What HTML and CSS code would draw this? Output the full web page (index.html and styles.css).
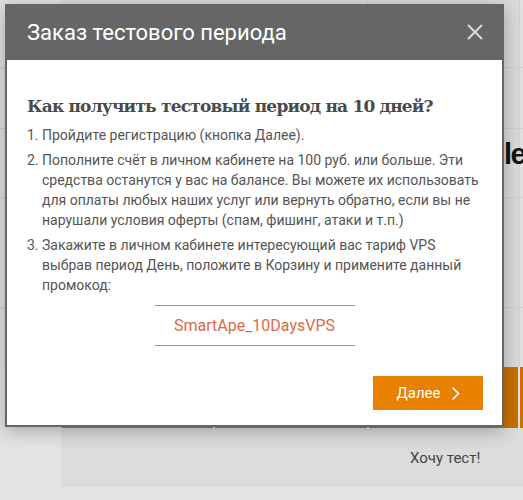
FILE: index.html
```html
<!DOCTYPE html>
<html lang="ru">
<head>
<meta charset="utf-8">
<title>Заказ тестового периода</title>
<link rel="stylesheet" href="styles.css">
</head>
<body>
<div class="page">
  <div class="grid">
    <div class="row r1"><div class="c0"></div><div class="c"></div><div class="c wide"></div><div class="c"></div><div class="c4"></div></div>
    <div class="row r2"><div class="c0"></div><div class="c"></div><div class="c wide"></div><div class="c"></div><div class="c4"></div></div>
    <div class="row r3"><div class="c0"></div><div class="c"></div><div class="c wide"></div><div class="c"></div><div class="c4"></div><span class="bgtitle">lel</span></div>
    <div class="row r4"><div class="c0"></div><div class="c"></div><div class="c wide"></div><div class="c"></div><div class="c4"></div></div>
    <div class="row r5 last"><div class="c0"></div><div class="c"></div><div class="c wide"></div><div class="c"></div><div class="c4"></div></div>
  </div>
  <div class="orange-row">
    <div class="ocell"></div><div class="ocell"></div><div class="ocell"></div><div class="ocell"></div>
  </div>
  <div class="cta"><span class="cta-text">Хочу тест!</span></div>
</div>

<div class="modal">
  <div class="modal-head">
    <span class="modal-title">Заказ тестового периода</span>
    <svg class="close" width="16" height="16" viewBox="0 0 16 16"><path d="M1 1 L15 15 M15 1 L1 15" stroke="#dcdcdc" stroke-width="2" fill="none"/></svg>
  </div>
  <div class="modal-body">
    <h2 class="heading">Как получить тестовый период на 10 дней?</h2>
    <ol class="steps">
      <li class="step"><span class="num">1.</span><span class="txt">Пройдите регистрацию (кнопка Далее).</span></li>
      <li class="step"><span class="num">2.</span><span class="txt">Пополните счёт в личном кабинете на 100 руб. или больше. Эти средства останутся у вас на балансе. Вы можете их использовать для оплаты любых наших услуг или вернуть обратно, если вы не нарушали условия оферты (спам, фишинг, атаки и т.п.)</span></li>
      <li class="step"><span class="num">3.</span><span class="txt">Закажите в личном кабинете интересующий вас тариф VPS выбрав период День, положите в Корзину и примените данный промокод:</span></li>
    </ol>
    <div class="promo">SmartApe_10DaysVPS</div>
    <div class="actions">
      <button class="btn">Далее <svg class="chev" width="9" height="15" viewBox="0 0 9 15"><polyline points="1.5,1.5 7.5,7.5 1.5,13.5" stroke="#fff" stroke-width="1.6" fill="none"/></svg></button>
    </div>
  </div>
</div>
</body>
</html>
```

FILE: styles.css
```css
html, body {
  margin: 0;
  padding: 0;
}
body {
  width: 523px;
  height: 500px;
  overflow: hidden;
  background: #e4e4e4;
  font-family: Roboto, "Liberation Sans", sans-serif;
  position: relative;
}
.page {
  width: 523px;
}
.grid {
  display: flex;
  flex-direction: column;
}
.row {
  display: grid;
  grid-template-columns: 62px 152px 154px 152px 1fr;
  border-bottom: 1px solid #cfcfcf;
  position: relative;
}
.row.last { border-bottom: none; }
.r1 { height: 67px; }
.r2 { height: 60px; }
.r3 { height: 68px; }
.r4 { height: 109px; }
.r5 { height: 59px; }
.c {
  border-right: 1px solid #d0d0d0;
  background: #dbdbdb;
}
.c4 { background: #e1e1e1; }
.c0 { background: #e2e2e2; }
.bgtitle {
  position: absolute;
  left: 504px;
  top: 9px;
  font-family: "Liberation Sans", sans-serif;
  font-weight: bold;
  font-size: 29px;
  letter-spacing: -1.5px;
  color: #141414;
  white-space: nowrap;
}
.orange-row {
  display: grid;
  grid-template-columns: 151px 152px 149px 1fr;
  column-gap: 2px;
  margin-left: 62px;
  height: 61px;
}
.ocell { background: #c97000; }
.cta {
  margin-left: 61px;
  height: 59px;
  background: #dcdcdc;
  display: flex;
  align-items: center;
  padding-left: 349px;
}
.cta-text {
  font-size: 15px;
  color: #444;
}

.modal {
  position: absolute;
  left: 5px;
  top: 4px;
  width: 499px;
  box-shadow: 0 4px 18px rgba(0,0,0,0.28);
}
.modal-head {
  height: 56px;
  background: #666666;
  display: flex;
  align-items: center;
  justify-content: space-between;
  padding: 0 21px 0 22px;
}
.modal-title {
  color: #fff;
  font-size: 22px;
  font-weight: 400;
}
.close { display: block; }
.modal-body {
  background: #fff;
  border: 2px solid #666666;
  border-top: none;
  padding: 34px 20px 15px 20px;
}
.heading {
  margin: 0;
  font-family: "DejaVu Serif", "Liberation Serif", serif;
  font-weight: bold;
  font-size: 17px;
  line-height: 24px;
  color: #4a4a4a;
  letter-spacing: -0.8px;
}
.steps {
  list-style: none;
  margin: 7px 0 0 0;
  padding: 0;
  color: #555;
  font-size: 14px;
  line-height: 20px;
}
.step {
  display: flex;
  margin-bottom: 5px;
}
.step:last-child { margin-bottom: 0; }
.num {
  flex: 0 0 15px;
}
.txt { flex: 1; }
.promo {
  width: 200px;
  margin: 10px auto 0;
  border-top: 1px solid #e07a5c;
  border-bottom: 1px solid #e07a5c;
  text-align: center;
  line-height: 39px;
  font-size: 16px;
  color: #e0694a;
}
.actions {
  display: flex;
  justify-content: flex-end;
  margin-top: 30px;
}
.btn {
  width: 110px;
  height: 34px;
  border: none;
  background: #e88000;
  color: #fff;
  font-family: Roboto, "Liberation Sans", sans-serif;
  font-size: 15px;
  display: flex;
  align-items: center;
  justify-content: center;
  gap: 10px;
  padding: 0;
  margin-right: -1px;
}
.chev { display: block; }
```
